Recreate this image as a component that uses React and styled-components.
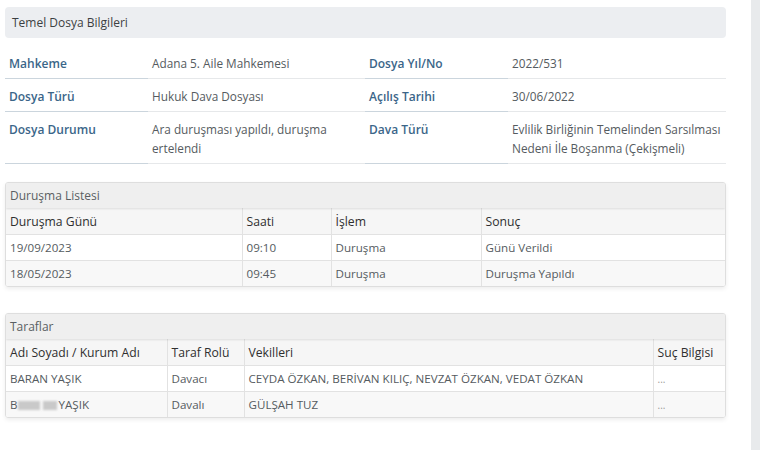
import React from 'react';
import styled, { createGlobalStyle } from 'styled-components';

const LABEL_BLUE = '#3b6689';
const TEXT = '#555b60';
const HEAD_TEXT = '#2f2f2f';
const BORDER = '#e2e2e2';

const GlobalStyle = createGlobalStyle`
  body {
    margin: 0;
    background: #fff;
    font-family: "Open Sans", "Noto Sans", sans-serif;
  }
`;

const Page = styled.div`
  display: flex;
  height: 450px;
  overflow: hidden;
`;

const Content = styled.div`
  flex: 0 0 721px;
  margin-left: 5px;
  padding-top: 7px;
`;

const Scrollbar = styled.div`
  margin-left: auto;
  width: 9px;
  background: #e8eaec;
`;

const TitleBar = styled.div`
  height: 31px;
  line-height: 31px;
  padding-left: 7px;
  border-radius: 4px;
  background: #eceef1;
  color: #3c3f42;
  font-size: 12px;
`;

const InfoGrid = styled.div`
  display: grid;
  grid-template-columns: 143px 217px 143px 1fr;
  margin-top: 8px;
`;

const InfoLabel = styled.div`
  padding: 8px 4px 5px;
  line-height: 19px;
  font-size: 12px;
  font-weight: 600;
  color: ${LABEL_BLUE};
  border-bottom: 1px solid #cbd5dd;
`;

const InfoValue = styled.div`
  padding: 8px 2px 5px 4px;
  line-height: 19px;
  font-size: 11.8px;
  color: ${TEXT};
  white-space: nowrap;
  border-bottom: 1px solid #e6e8ea;
`;

const Panel = styled.div`
  margin-top: ${p => p.$gap}px;
  border: 1px solid #dedede;
  border-radius: 3px;
  box-shadow: 0 2px 4px rgba(0, 0, 0, 0.07);
  overflow: hidden;
`;

const PanelHead = styled.div`
  position: relative;
  height: 25px;
  line-height: 25px;
  padding-left: 4px;
  background: #efefef;
  color: #5a5f63;
  font-size: 12px;
  box-shadow: 0 1px 2px rgba(0, 0, 0, 0.1);
`;

const Table = styled.table`
  width: 100%;
  border-collapse: collapse;
  table-layout: fixed;
`;

const Th = styled.th`
  height: 26px;
  padding: 0 4px;
  text-align: left;
  font-size: 12.2px;
  font-weight: 400;
  color: ${HEAD_TEXT};
  background: #f6f6f6;
  border-left: 1px solid ${BORDER};
  white-space: nowrap;
  &:first-child { border-left: none; }
`;

const Tr = styled.tr`
  background: ${p => (p.$odd ? '#f8f8f8' : '#fff')};
`;

const Td = styled.td`
  height: 25px;
  padding: 0 4px;
  font-size: ${p => (p.$muted ? '10px' : '11.6px')};
  color: ${p => (p.$muted ? '#9a9a9a' : TEXT)};
  border-top: 1px solid ${BORDER};
  border-left: 1px solid ${BORDER};
  white-space: nowrap;
  &:first-child { border-left: none; }
`;

const Blur = styled.span`
  display: inline-block;
  width: ${p => p.$w}px;
  height: 9px;
  margin-right: ${p => p.$mr}px;
  vertical-align: -1px;
  background: #c9c9c9;
  filter: blur(1.2px);
`;

const info = [
  ['Mahkeme', 'Adana 5. Aile Mahkemesi', 'Dosya Yıl/No', '2022/531'],
  ['Dosya Türü', 'Hukuk Dava Dosyası', 'Açılış Tarihi', '30/06/2022'],
  [
    'Dosya Durumu',
    <>Ara duruşması yapıldı, duruşma<br />ertelendi</>,
    'Dava Türü',
    <>Evlilik Birliğinin Temelinden Sarsılması<br />Nedeni İle Boşanma (Çekişmeli)</>,
  ],
];

const hearings = [
  ['19/09/2023', '09:10', 'Duruşma', 'Günü Verildi'],
  ['18/05/2023', '09:45', 'Duruşma', 'Duruşma Yapıldı'],
];

export default function App() {
  return (
    <Page>
      <GlobalStyle />
      <Content>
        <TitleBar>Temel Dosya Bilgileri</TitleBar>
        <InfoGrid>
          {info.map((row, i) => (
            <React.Fragment key={i}>
              <InfoLabel>{row[0]}</InfoLabel>
              <InfoValue>{row[1]}</InfoValue>
              <InfoLabel>{row[2]}</InfoLabel>
              <InfoValue>{row[3]}</InfoValue>
            </React.Fragment>
          ))}
        </InfoGrid>

        <Panel $gap={18}>
          <PanelHead>Duruşma Listesi</PanelHead>
          <Table>
            <colgroup>
              <col style={{ width: 236 }} />
              <col style={{ width: 89 }} />
              <col style={{ width: 150 }} />
              <col />
            </colgroup>
            <thead>
              <tr>
                <Th>Duruşma Günü</Th>
                <Th>Saati</Th>
                <Th>İşlem</Th>
                <Th>Sonuç</Th>
              </tr>
            </thead>
            <tbody>
              {hearings.map((r, i) => (
                <Tr key={i} $odd={i % 2 === 1}>
                  {r.map((c, j) => <Td key={j}>{c}</Td>)}
                </Tr>
              ))}
            </tbody>
          </Table>
        </Panel>

        <Panel $gap={26}>
          <PanelHead>Taraflar</PanelHead>
          <Table>
            <colgroup>
              <col style={{ width: 161 }} />
              <col style={{ width: 77 }} />
              <col style={{ width: 409 }} />
              <col />
            </colgroup>
            <thead>
              <tr>
                <Th>Adı Soyadı / Kurum Adı</Th>
                <Th>Taraf Rolü</Th>
                <Th>Vekilleri</Th>
                <Th>Suç Bilgisi</Th>
              </tr>
            </thead>
            <tbody>
              <Tr>
                <Td>BARAN YAŞIK</Td>
                <Td>Davacı</Td>
                <Td>CEYDA ÖZKAN, BERİVAN KILIÇ, NEVZAT ÖZKAN, VEDAT ÖZKAN</Td>
                <Td $muted>...</Td>
              </Tr>
              <Tr $odd>
                <Td>
                  B<Blur $w={22} $mr={3} /><Blur $w={14} $mr={2} />YAŞIK
                </Td>
                <Td>Davalı</Td>
                <Td>GÜLŞAH TUZ</Td>
                <Td $muted>...</Td>
              </Tr>
            </tbody>
          </Table>
        </Panel>
      </Content>
      <Scrollbar />
    </Page>
  );
}
